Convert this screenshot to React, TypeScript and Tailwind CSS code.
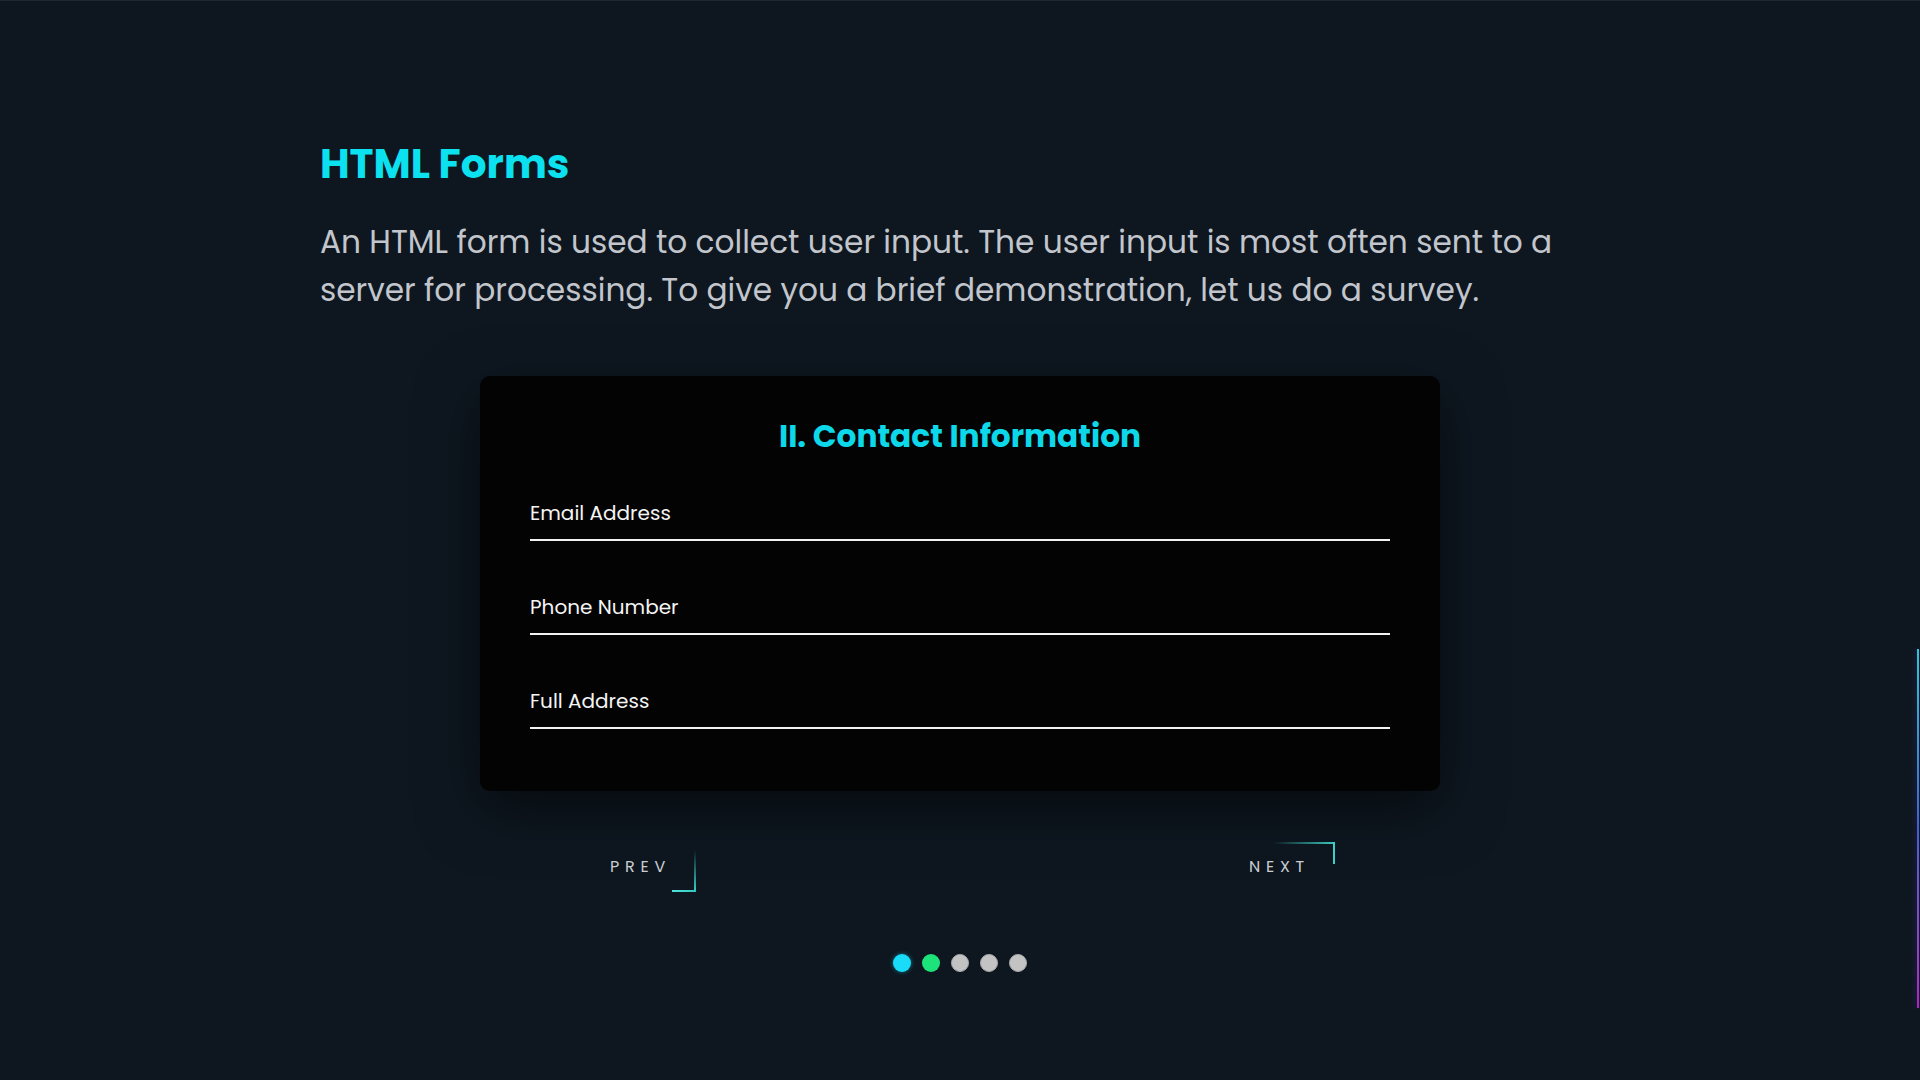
import React from "react";

const font = { fontFamily: '"Poppins", "Open Sans", "Noto Sans", sans-serif' };

function Field({ label }: { label: string }) {
  return (
    <div className="border-b-2 border-[#f2f2f2] pb-[11px]">
      <div className="h-[30px] text-[20px] leading-[30px] text-[#f4f4f4]">{label}</div>
    </div>
  );
}

export default function App() {
  return (
    <div
      className="relative h-[1080px] w-full overflow-hidden border-t border-[#1d2631] bg-[#0e1720]"
      style={font}
    >
      <div className="mx-auto w-[1280px] pt-[133px]">
        <h1 className="text-[40.5px] font-bold leading-[60px] text-[#0ce1f0]">HTML Forms</h1>
        <p className="mt-[24px] text-[31.2px] leading-[48px] text-[#c2c6cc]">
          An HTML form is used to collect user input. The user input is most often sent to a
          server for processing. To give you a brief demonstration, let us do a survey.
        </p>

        <div className="mx-auto mt-[62px] w-[960px] rounded-[10px] bg-[#030303] px-[50px] pb-[62px] pt-[38px] shadow-[0_18px_60px_rgba(0,0,0,0.55)]">
          <h2 className="text-center text-[31.2px] font-bold leading-[45px] text-[#0cd8ea]">
            II. Contact Information
          </h2>
          <div className="mt-[39px] flex flex-col gap-[51px]">
            <Field label="Email Address" />
            <Field label="Phone Number" />
            <Field label="Full Address" />
          </div>
        </div>

        <div className="mx-auto mt-[51px] flex w-[960px] justify-between px-[105px]">
          <button className="relative flex h-[50px] items-center px-[25px] text-[16px] tracking-[0.36em] text-[#c9cdd2]">
            PREV
            <span className="absolute bottom-0 right-0 h-[42px] w-[2px] bg-gradient-to-b from-transparent to-[#36d3cb]" />
            <span className="absolute bottom-0 right-0 h-[2px] w-[24px] bg-gradient-to-r from-[#4de6dc] to-[#2fc6be]" />
          </button>
          <button className="relative flex h-[50px] items-center px-[25px] text-[16px] tracking-[0.36em] text-[#c9cdd2]">
            NEXT
            <span className="absolute right-0 top-0 h-[2px] w-[62px] bg-gradient-to-r from-transparent to-[#3bc9c0]" />
            <span className="absolute right-0 top-0 h-[22px] w-[2px] bg-[#3ad0c8]" />
          </button>
        </div>

        <div className="mt-[62px] flex justify-center gap-[11px]">
          <span className="h-[18px] w-[18px] rounded-full bg-[#18dcf8] shadow-[0_0_4px_rgba(24,220,248,0.5)]" />
          <span className="h-[18px] w-[18px] rounded-full bg-[#1de47a]" />
          <span className="h-[18px] w-[18px] rounded-full border border-[#a9a9a9] bg-[#c3c3c3]" />
          <span className="h-[18px] w-[18px] rounded-full border border-[#a9a9a9] bg-[#c3c3c3]" />
          <span className="h-[18px] w-[18px] rounded-full border border-[#a9a9a9] bg-[#c3c3c3]" />
        </div>
      </div>

      <div className="absolute right-[1px] top-[648px] h-[359px] w-[2px] bg-gradient-to-b from-[#2cc6d8] via-[#4060d0] to-[#b020c4] shadow-[-2px_0_4px_rgba(60,40,120,0.5)]" />
    </div>
  );
}
